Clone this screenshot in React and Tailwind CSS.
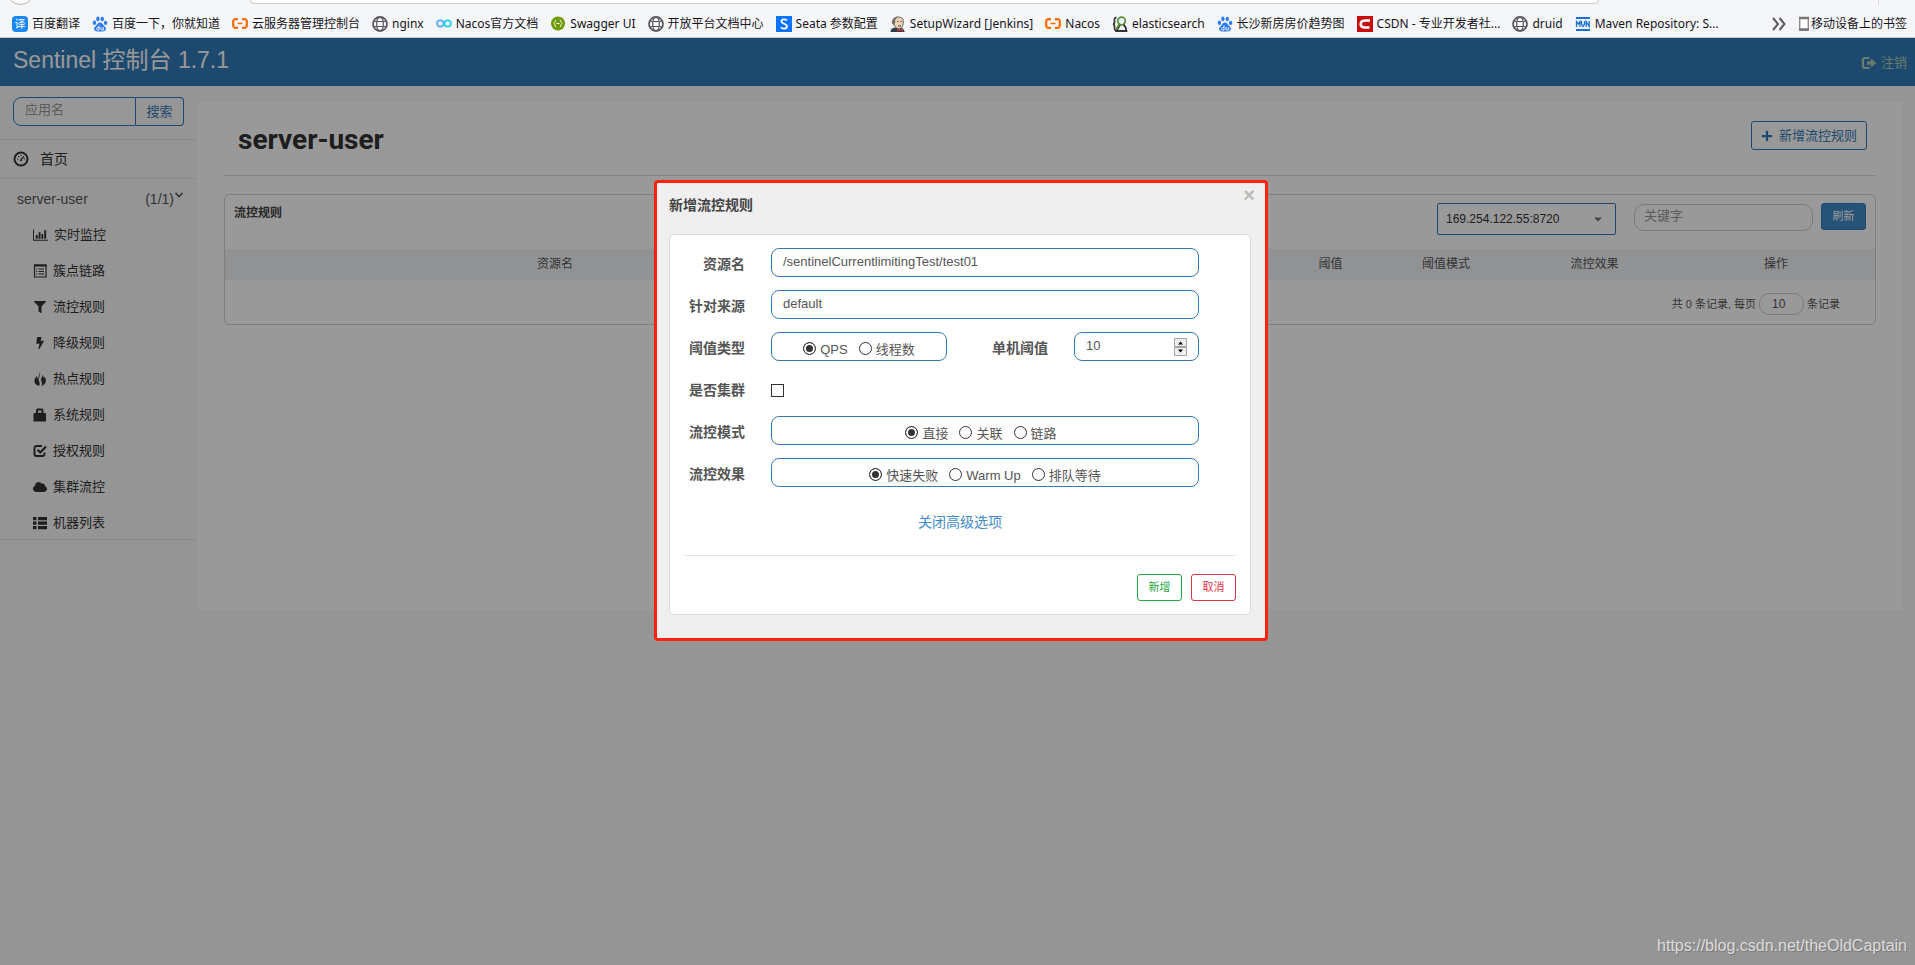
import { FaFilter, FaBolt, FaCloud, FaPlus, FaCaretDown } from "react-icons/fa";

const GlobeIcon = () => (
  <svg viewBox="0 0 16 16" className="size-4 shrink-0" fill="none" stroke="#5b5b5f" strokeWidth="1.2">
    <circle cx="8" cy="8" r="7" strokeWidth="1.8" />
    <ellipse cx="8" cy="8" rx="3.4" ry="7" />
    <path d="M1.5 5.5h13M1.5 10.5h13" />
  </svg>
);

const BracketIcon = () => (
  <svg viewBox="0 0 16 16" className="size-4 shrink-0" fill="none" stroke="#ff6a00" strokeWidth="2.2">
    <path d="M6 3.2H3.5A2.2 2.2 0 0 0 1.2 5.4v4.200A2.200 2.200 0 0 0 3.500 11.800H6" />
    <path d="M10 3.200h2.500a2.200 2.200 0 0 1 2.300 2.200v4.200a2.200 2.200 0 0 1-2.300 2.200H10" />
    <path d="M5.500 7.500h5" strokeWidth="1.500" />
  </svg>
);

const PawIcon = () => (
  <svg viewBox="0 0 16 16" className="size-4 shrink-0" fill="#2f7df6">
    <ellipse cx="2.400" cy="6.800" rx="1.700" ry="2.200" />
    <ellipse cx="5.900" cy="2.900" rx="1.700" ry="2.400" />
    <ellipse cx="10.300" cy="3" rx="1.700" ry="2.300" />
    <ellipse cx="13.600" cy="6.900" rx="1.700" ry="2.100" />
    <path d="M8 6.500c2 0 2.500 1.800 4 3.200 1.500 1.300 2.200 2.300 1.800 3.900-.5 1.900-2.300 2-5.800 2s-5.300-.1-5.800-2c-.4-1.600.3-2.600 1.800-3.900C5.500 8.300 6 6.500 8 6.500z" />
    <path d="M7 9.500v4.500H5.500c-1.200 0-1.200-2.500 0-2.500H7M9 11v2c0 .7.300 1 1 1h1.300v-3" fill="none" stroke="#fff" strokeWidth=".9" />
  </svg>
);

const TranslateIcon = () => (
  <span className="flex size-4 shrink-0 items-center justify-center rounded-sm bg-[#1787fb] text-[11px] leading-4 text-white">
    译
  </span>
);

const InfinityIcon = () => (
  <svg viewBox="0 0 16 16" className="size-4 shrink-0" fill="none" strokeWidth="1.8">
    <circle cx="4.300" cy="7.500" r="3.200" stroke="#5aa9fa" />
    <circle cx="11.700" cy="7.500" r="3.200" stroke="#21d3ee" />
  </svg>
);

const SwaggerIcon = () => (
  <svg viewBox="0 0 16 16" className="size-4 shrink-0" fill="none">
    <circle cx="8" cy="7.500" r="7" fill="#6d9a00" />
    <path d="M6.200 4C4.500 4 5.500 7 4 7.500 5.500 8 4.500 11 6.200 11M9.800 4c1.700 0 .7 3 2.200 3.500-1.500.5-.5 3.500-2.200 3.500M6.500 7.500h3" stroke="#fff" />
  </svg>
);

const SeataIcon = () => (
  <svg viewBox="0 0 16 16" className="size-4 shrink-0" fill="none">
    <path d="M0 0h16v16H0z" fill="#0a73ff" />
    <path d="M11 4.500C10 3 5.500 2.800 5.500 5.500c0 2.500 5.500 2 5.500 4.800 0 3-5 2.700-6 1" stroke="#fff" strokeWidth="1.800" />
  </svg>
);

const JenkinsIcon = () => (
  <svg viewBox="0 0 16 16" className="size-4 shrink-0" fill="none">
    <path d="M.5 16c0-3 2-4 4.500-4.500l6 .5c2.500.5 3.500 2 3.500 4z" fill="#2c3d4b" />
    <path d="M3.200 3.500C4.500.5 11.500 0 13 3.500c.9 3 .2 8-3.500 9.500C5.500 12.500 2 8 3.200 3.500z" fill="#ecd3b7" stroke="#544a42" strokeWidth=".8" />
    <path d="M2 7.500C1.500 2.500 5 .3 9 .8L5.500 3l-.3 3.500-1 3z" fill="#75716c" />
    <path d="M7.200 5.500h1.300M10.500 5.500h1.300M8 10h3" stroke="#4b3d35" />
    <path d="M7 12.500l3 1.200 3-1.200v3l-3-1-3 1z" fill="#cf3638" />
  </svg>
);

const ElasticIcon = () => (
  <svg viewBox="0 0 16 16" className="size-4 shrink-0" fill="none" strokeWidth="1.800">
    <path d="M4.500 1.500C2 1.500 2.500 4 2.500 6S1 8 1 8s1.500.3 1.500 2.500S2.500 14.500 4 14.500" stroke="#3b3b3b" />
    <circle cx="9.500" cy="5" r="3.800" stroke="#56943b" />
    <path d="M8 8.800L4.500 15h10c0-3-1.500-5-3-6.500" stroke="#343434" />
    <path d="M7.500 8l-3 5" stroke="#56943b" />
  </svg>
);

const CsdnIcon = () => (
  <svg viewBox="0 0 16 16" className="size-4 shrink-0" fill="none">
    <path d="M0 0h16v16H0z" fill="#c90c0c" />
    <path d="M13 4.500H8.500C5.500 4.500 3.700 6 3.700 8.200c0 2 1.300 3.300 4 3.300h4.800" stroke="#fff" strokeWidth="2.600" />
  </svg>
);

const MvnIcon = () => (
  <svg viewBox="0 0 16 16" className="size-4 shrink-0" fill="none" stroke="#1673d8">
    <path d="M1 2h14M1 14h14" strokeWidth="2" />
    <path d="M1.500 11V5.500L3.200 8 5 5.500V11M6.500 5v3l1.500 2.500L9.500 8V5M11.200 11V5.500l3 5V5" strokeWidth="1.300" />
  </svg>
);

const bookmarks = [
  { icon: TranslateIcon, label: "百度翻译" },
  { icon: PawIcon, label: "百度一下，你就知道" },
  { icon: BracketIcon, label: "云服务器管理控制台" },
  { icon: GlobeIcon, label: "nginx" },
  { icon: InfinityIcon, label: "Nacos官方文档" },
  { icon: SwaggerIcon, label: "Swagger UI" },
  { icon: GlobeIcon, label: "开放平台文档中心" },
  { icon: SeataIcon, label: "Seata 参数配置" },
  { icon: JenkinsIcon, label: "SetupWizard [Jenkins]" },
  { icon: BracketIcon, label: "Nacos" },
  { icon: ElasticIcon, label: "elasticsearch" },
  { icon: PawIcon, label: "长沙新房房价趋势图" },
  { icon: CsdnIcon, label: "CSDN - 专业开发者社..." },
  { icon: GlobeIcon, label: "druid" },
  { icon: MvnIcon, label: "Maven Repository: S..." },
];

const BookmarkBar = () => (
  <div className="relative h-[38px] shrink-0 overflow-hidden border-b border-[#c9cacc] bg-[#f5f6f8] font-['Noto_Sans','Noto_Sans_CJK_SC',sans-serif] text-xs text-[#15141a]">
    {/* Bottom edge of the address bar */}
    <div className="absolute -top-6 left-1.5 size-[29px] rounded-full border border-[#b5b5b8] bg-white" />
    <div className="absolute -top-1 right-[316px] left-[250px] h-2 rounded-b-sm border border-[#c9cacc] bg-white" />
    <div className="absolute top-0 right-9 h-[5px] w-px bg-[#d5d5d8]" />

    <div className="flex h-full items-center pt-2.5 pr-2 pl-3">
      <nav className="flex items-center gap-3">
        {bookmarks.map(({ icon: Icon, label }) => (
          <a key={label} href="#" className="flex items-center gap-1 leading-4 whitespace-nowrap">
            <Icon />
            {label}
          </a>
        ))}
      </nav>
      <div className="ml-auto flex items-center gap-3">
        <button type="button" aria-label="更多书签">
          <svg viewBox="0 0 16 16" className="size-4" fill="none" stroke="#5b5b5f" strokeWidth="2">
            <path d="M2 2l5 6-5 6M8.500 2l5 6-5 6" />
          </svg>
        </button>
        <a href="#" className="flex items-center gap-0.5 leading-4 whitespace-nowrap">
          <svg viewBox="0 0 10 16" className="h-4 w-2.5" fill="none">
            <rect x=".7" y="1.700" width="8.600" height="12.600" rx="1" stroke="#8b8b90" strokeWidth="1.400" fill="#fff" />
            <path d="M0 2h10M0 13.500h10" stroke="#77777c" strokeWidth="2.400" />
          </svg>
          移动设备上的书签
        </a>
      </div>
    </div>
  </div>
);

const DashboardIcon = () => (
  <svg viewBox="0 0 16 16" className="size-4 shrink-0" fill="none" stroke="currentColor">
    <circle cx="8" cy="8" r="6.500" strokeWidth="2" />
    <path d="M7.500 9L11 5.500" strokeWidth="1.300" />
    <path d="M4 8h1.300M5.200 5.200l.8.8M8 4v1M10.800 8H12M7 9.500h2" strokeWidth="1.200" />
  </svg>
);

const StatsIcon = () => (
  <svg viewBox="0 0 16 14" className="h-3.5 w-[15px] shrink-0" fill="currentColor">
    <path d="M0 1h1v11h15v1.200H0zM3 7h2v4H3zM6 4h2v7H6zM9 6h2v5H9zM12 2h2v9h-2z" />
  </svg>
);

const ListAltIcon = () => (
  <svg viewBox="0 0 14 14" className="size-3.5 shrink-0" fill="none" stroke="currentColor">
    <path d="M1.500 1h11.500v12H1.500z" strokeWidth="1.200" />
    <path d="M1 1.500h12.500" strokeWidth="2" />
    <path d="M3 5h1.200M3 7.500h1.200M3 10h1.200M5.500 5H11M5.500 7.500H11M5.500 10H11" />
  </svg>
);

const FilterIcon = () => <FaFilter className="size-3.5 shrink-0 p-px" />;

const FlashIcon = () => <FaBolt className="size-3.5 shrink-0 p-px" />;

const FireIcon = () => (
  <svg viewBox="0 0 14 14" className="size-3.5 shrink-0" fill="currentColor">
    <path d="M6.500 0C8 2 6.700 4 6 5.500c-.8 1.700-.5 3 .3 4.200.6 1 .4 2.500-.2 4.200C2.500 13 1 10.500 1.500 8.200 1.900 6.500 3 5.500 3 4c1 .8 1.300 1.700 1.200 2.700C5.800 4.700 7 2.700 6.500 0zM9.500 2.500c1 1.200.5 2.500 1.400 3.500.3-.5.4-1 .3-1.600 1.500 1.600 2 3.500 1.500 5.300-.5 2-2 3.500-4.300 4.300.7-1.500.9-2.800.2-4.200-.8-1.500-.8-2.800 0-4.100.6-1.100.9-2 .9-3.200z" />
  </svg>
);

const LockIcon = () => (
  <svg viewBox="0 0 14 14" className="size-3.5 shrink-0" fill="currentColor">
    <path d="M3 5V2.500C3 1 4 .5 5 .5h3.500c1 0 2 .5 2 2V5H12c.6 0 1 .4 1 1v7.500H.5V6c0-.6.4-1 1-1zm2-.2h3.500V2.500H5z" />
  </svg>
);

const CheckIcon = () => (
  <svg viewBox="0 0 14 14" className="size-3.5 shrink-0" fill="none" stroke="currentColor">
    <path d="M9 2H3.500C2.200 2 1.500 2.800 1.500 4v6c0 1.300.7 2 2 2h6c1.300 0 2-.7 2-2V8.500" strokeWidth="1.900" />
    <path d="M4.500 5.800l2.800 2.700 5.700-6" strokeWidth="2.100" />
  </svg>
);

const CloudIcon = () => <FaCloud className="size-3.5 shrink-0" />;

const ThListIcon = () => (
  <svg viewBox="0 0 14 14" className="size-3.5 shrink-0" fill="currentColor">
    <path d="M0 1h3.500v3.200H0zM5 1h9v3.200H5zM0 5.500h3.500v3.200H0zM5 5.500h9v3.200H5zM0 10h3.500v3.200H0zM5 10h9v3.200H5z" />
  </svg>
);

const menu = [
  { icon: StatsIcon, label: "实时监控" },
  { icon: ListAltIcon, label: "簇点链路" },
  { icon: FilterIcon, label: "流控规则" },
  { icon: FlashIcon, label: "降级规则" },
  { icon: FireIcon, label: "热点规则" },
  { icon: LockIcon, label: "系统规则" },
  { icon: CheckIcon, label: "授权规则" },
  { icon: CloudIcon, label: "集群流控" },
  { icon: ThListIcon, label: "机器列表" },
];

const Header = () => (
  <header className="flex h-12 items-center justify-between bg-[#337ab7] pr-2 pl-[13px]">
    <a href="#" className="pb-1 text-[23px] leading-8 text-white">
      Sentinel 控制台 1.7.1
    </a>
    <a href="#" className="flex items-center gap-1 pt-0.5 text-[13px] leading-5 text-[#add0b8]">
      <svg viewBox="0 0 16 14" className="h-3.5 w-4" fill="none" stroke="currentColor">
        <path d="M8.500 2H4C2.700 2 2 2.700 2 4v6c0 1.300.7 2 2 2h4.500" strokeWidth="2.200" />
        <path d="M6 5.300h4V2.800L15.500 7 10 11.200V8.700H6z" fill="currentColor" stroke="none" />
      </svg>
      注销
    </a>
  </header>
);

const Sidebar = () => (
  <aside className="w-[197px] shrink-0 text-[#333]">
    <form className="flex px-[13px] pt-[11px] pb-[13px]">
      <input
        type="text"
        aria-label="应用名"
        placeholder="应用名"
        className="h-[29px] w-[123px] min-w-0 rounded-l-lg border border-[#337ab7] bg-white/60 pb-1 pl-[11px] text-[13px] placeholder:text-[#999]"
      />
      <button type="button" className="h-[29px] flex-1 rounded-r border border-l-0 border-[#337ab7] text-[13px] text-[#337ab7]">
        搜索
      </button>
    </form>
    <a href="#" className="flex h-10 items-center gap-[11px] border-y border-[#e7e7e7] pl-[13px] text-sm">
      <DashboardIcon />
      首页
    </a>
    <div className="flex h-9 items-center pt-1 pr-[13px] pl-[17px] text-sm text-[#555]">
      <a href="#">server-user</a>
      <span className="ml-auto">(1/1)</span>
      <svg viewBox="0 0 10 10" className="mb-2 size-2.5" fill="none" stroke="currentColor" strokeWidth="1.600">
        <path d="M1.500 3L5 6.500 8.500 3" />
      </svg>
    </div>
    <ul className="border-b border-[#e7e7e7]">
      {menu.map(({ icon: Icon, label }) => (
        <li key={label}>
          <a href="#" className="flex h-9 items-center gap-1.5 pt-[3px] pl-[33px] text-[13px]">
            <Icon />
            {label}
          </a>
        </li>
      ))}
    </ul>
  </aside>
);

const RulesPanel = () => (
  <section className="rounded-[5px] border border-[#d4d4d4] text-[#555]">
    <div className="flex h-[54px] items-start pt-2 pr-[9px] pl-[9px]">
      <h2 className="mr-auto text-xs leading-5 font-bold text-[#444]">流控规则</h2>
      <div className="relative mr-[18px] w-[179px]">
        <select
          aria-label="机器"
          className="h-8 w-full appearance-none rounded-xs border border-[#337ab7] pl-2 text-xs text-[#333]"
          defaultValue="169.254.122.55:8720"
        >
          <option>169.254.122.55:8720</option>
        </select>
        <FaCaretDown className="pointer-events-none absolute top-2.5 right-3 size-3 text-[#777]" />
      </div>
      <input
        type="text"
        aria-label="关键字"
        placeholder="关键字"
        className="mt-px mr-2 h-[27px] w-[179px] rounded-[10px] border border-[#ccc] pb-1 pl-[9px] text-[13px] placeholder:text-[#999]"
      />
      <button type="button" className="h-[27px] w-[45px] rounded-[3px] border border-[#357ebd] bg-[#428bca] text-[11px] text-white">
        刷新
      </button>
    </div>
    <table className="w-full table-fixed text-xs">
      <thead>
        <tr className="h-[31px] bg-[#f1f4f7] *:pb-0.5 *:font-normal">
          <th className="w-[40%]">资源名</th>
          <th className="w-[8%]" />
          <th className="w-[8%]" />
          <th className="w-[8%]" />
          <th className="w-[6%]">阈值</th>
          <th className="w-[8%]">阈值模式</th>
          <th className="w-[10%]">流控效果</th>
          <th className="w-[12%]">操作</th>
        </tr>
      </thead>
    </table>
    <div className="flex h-11 items-center justify-end gap-[3px] pt-1 pr-[35px] text-[11px]">
      <label htmlFor="page-size">共 0 条记录, 每页</label>
      <input
        id="page-size"
        type="text"
        defaultValue="10"
        className="h-[22px] w-[45px] rounded-[10px] border border-[#ccc] pl-3 text-xs"
      />
      <span>条记录</span>
    </div>
  </section>
);

const Radio = ({ name, label, checked }) => (
  <label className="flex items-center gap-1">
    <input
      type="radio"
      name={name}
      defaultChecked={checked}
      className="size-[13px] appearance-none rounded-full border border-[#333] bg-white checked:bg-[#333] checked:shadow-[inset_0_0_0_2px_white]"
    />
    <span className="pt-0.5">{label}</span>
  </label>
);

const RadioGroup = ({ name, label, options, className }) => (
  <div
    role="radiogroup"
    aria-label={label}
    className={`flex h-[29px] items-center justify-center gap-[11px] rounded-lg border border-[#337ab7] pt-1 text-[13px] ${className}`}
  >
    {options.map((option, i) => (
      <Radio key={option} name={name} label={option} checked={i === 0} />
    ))}
  </div>
);

const Row = ({ label, htmlFor, children }) => (
  <div className="flex h-[29px] items-center">
    <label htmlFor={htmlFor} className="mr-[26px] w-[61px] pt-0.5 text-right text-sm font-bold">
      {label}
    </label>
    {children}
  </div>
);

const fieldClass = "h-[29px] rounded-lg border border-[#337ab7] pb-0.5 pl-[11px] text-[13px]";

const RuleDialog = () => (
  <div className="absolute inset-x-0 top-[142px] flex justify-center pl-[7px]">
    <div
      role="dialog"
      aria-label="新增流控规则"
      className="w-[614px] rounded-sm border-3 border-[#ff2010] bg-[#efefef] pr-3.5 pb-[23px] pl-3 text-[#555]"
    >
      <div className="flex h-[51px] items-start justify-between pt-2.5">
        <h3 className="text-sm leading-6 font-bold text-[#444]">新增流控规则</h3>
        <button type="button" aria-label="关闭" className="-mt-2.5 -mr-1 text-xl leading-6 font-bold text-[#bbb]">
          ×
        </button>
      </div>
      <form className="rounded-[5px] border border-[#d9d9d9] bg-white px-3.5 py-[13px]">
        <div className="flex flex-col gap-[13px]">
          <Row label="资源名" htmlFor="resource">
            <input id="resource" type="text" defaultValue="/sentinelCurrentlimitingTest/test01" className={`${fieldClass} w-[428px]`} />
          </Row>
          <Row label="针对来源" htmlFor="limit-app">
            <input id="limit-app" type="text" defaultValue="default" className={`${fieldClass} w-[428px]`} />
          </Row>
          <Row label="阈值类型">
            <RadioGroup name="grade" label="阈值类型" options={["QPS", "线程数"]} className="w-[176px]" />
            <label htmlFor="count" className="ml-auto pt-0.5 text-sm font-bold">
              单机阈值
            </label>
            <div className="relative mr-[37px] ml-[26px]">
              <input
                id="count"
                type="number"
                defaultValue="10"
                className={`${fieldClass} w-[125px] [&::-webkit-inner-spin-button]:appearance-none`}
              />
              <svg viewBox="0 0 13 18" className="pointer-events-none absolute top-[6px] right-3 h-[18px] w-[13px]">
                <path d="M.5.5h12v8H.5zM.5 9.500h12v8H.5z" fill="#efefef" stroke="#a5a5a5" />
                <path d="M4 6.500h5L6.500 3.500zM4 11.500h5l-2.500 3z" fill="#000" />
              </svg>
            </div>
          </Row>
          <Row label="是否集群" htmlFor="cluster">
            <input id="cluster" type="checkbox" className="mt-1 size-[13px] appearance-none border border-[#333] bg-white" />
          </Row>
          <Row label="流控模式">
            <RadioGroup name="strategy" label="流控模式" options={["直接", "关联", "链路"]} className="w-[428px] pr-2" />
          </Row>
          <Row label="流控效果">
            <RadioGroup name="behavior" label="流控效果" options={["快速失败", "Warm Up", "排队等待"]} className="w-[428px]" />
          </Row>
        </div>
        <div className="flex h-[69px] items-center justify-center border-b border-[#e5e5e5] pt-0.5">
          <a href="#" className="text-sm text-[#428bca]">
            关闭高级选项
          </a>
        </div>
        <div className="flex justify-end gap-[9px] pt-[18px] text-[11px]">
          <button type="button" className="h-[27px] w-[45px] rounded-[3px] border border-[#28a745] text-[#28a745]">
            新增
          </button>
          <button type="button" className="h-[27px] w-[45px] rounded-[3px] border border-[#dc3545] text-[#dc3545]">
            取消
          </button>
        </div>
      </form>
    </div>
  </div>
);

const App = () => {
  return (
    <div className="flex min-h-screen flex-col font-['Liberation_Sans','Noto_Sans_CJK_SC',sans-serif]">
      <BookmarkBar />
      <div className="relative flex-1 bg-[#f8f8f8]">
        <Header />
        <div className="flex">
          <Sidebar />
          <main className="mt-4 mr-3 min-h-[508px] flex-1 bg-white px-[27px]">
            <div className="mb-[18px] flex h-[74px] items-center justify-between border-b border-[#d9d9d9] pr-[9px] pl-3.5">
              <h1 className="pt-0.5 font-['Roboto',sans-serif] text-[28px] leading-8 font-bold text-[#333]">server-user</h1>
              <button type="button" className="mb-1.5 flex h-[29px] items-center gap-1.5 rounded-[3px] border border-[#337ab7] px-[9px] text-[13px] text-[#337ab7]">
                <FaPlus className="size-3" />
                新增流控规则
              </button>
            </div>
            <RulesPanel />
          </main>
        </div>

        <div className="absolute inset-0 bg-black/40" />
        <RuleDialog />
        <p className="absolute right-2 bottom-[7px] text-base leading-6 text-[#dcdcdc] [text-shadow:1px_1px_1px_#777]">
          https://blog.csdn.net/theOldCaptain
        </p>
      </div>
    </div>
  );
};

export default App;
